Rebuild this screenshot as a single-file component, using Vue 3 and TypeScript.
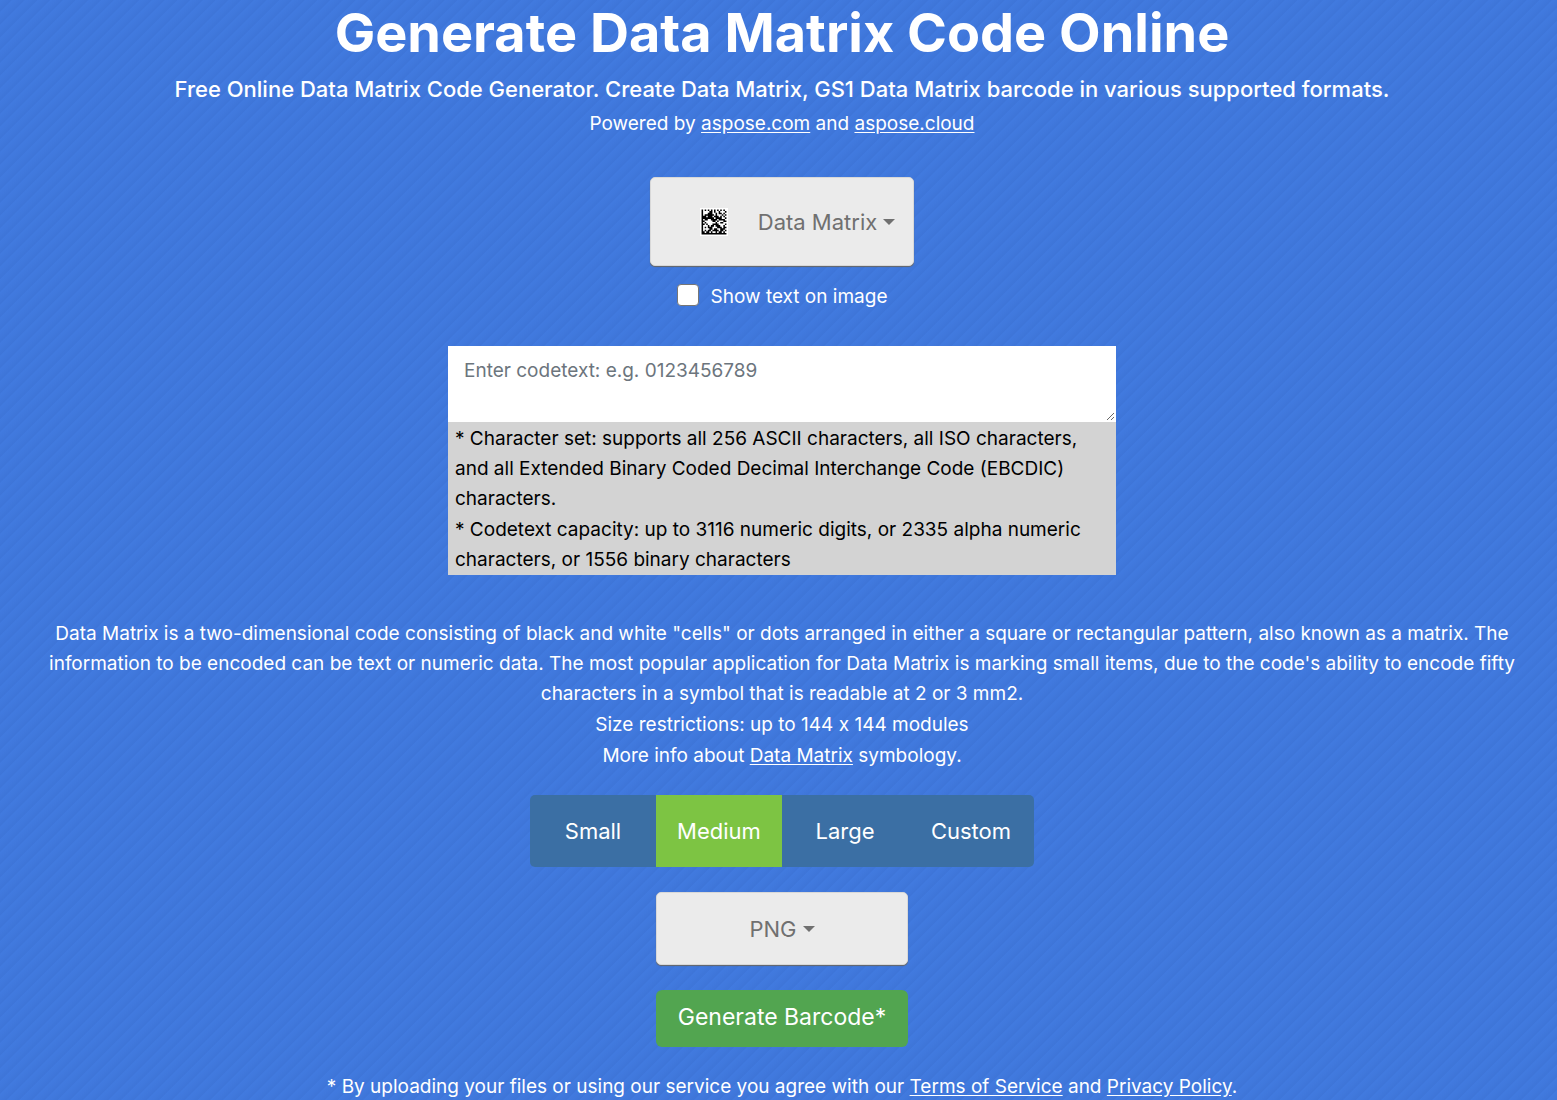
<script setup lang="ts">
import { ref } from 'vue'

const codetext = ref('')
const showText = ref(false)
const sizes = ['Small', 'Medium', 'Large', 'Custom']
const selectedSize = ref('Medium')

const modules = [
  '1010101010101010',
  '1000011010010001',
  '1000111001011010',
  '1011111101000101',
  '1110111011101010',
  '1111111101111001',
  '1011001111011110',
  '1100000110100011',
  '1010000001001100',
  '1101000111100001',
  '1000101101110010',
  '1010111000111011',
  '1000011011001110',
  '1010110111101101',
  '1101101001011010',
  '1111111111111111',
]
const modulePath = modules
  .flatMap((row, y) => [...row].map((bit, x) => (bit === '1' ? `M${x} ${y}h1v1h-1z` : '')))
  .join('')
</script>

<template>
  <main class="page">
    <header class="intro">
      <h1>Generate Data Matrix Code Online</h1>
      <h2>Free Online Data Matrix Code Generator. Create Data Matrix, GS1 Data Matrix barcode in various supported formats.</h2>
      <p>Powered by <a href="#aspose-com">aspose.com</a> and <a href="#aspose-cloud">aspose.cloud</a></p>
    </header>

    <button type="button" class="dropdown symbology">
      <svg class="symbol" viewBox="-1 -1 18 18" aria-hidden="true">
        <rect x="-1" y="-1" width="18" height="18" fill="#fff" />
        <path :d="modulePath" fill="#000" />
      </svg>
      <span>Data Matrix</span>
      <span class="caret"></span>
    </button>

    <label class="check">
      <input v-model="showText" type="checkbox" />
      <span>Show text on image</span>
    </label>

    <section class="entry">
      <textarea v-model="codetext" aria-label="Codetext" placeholder="Enter codetext: e.g. 0123456789"></textarea>
      <div class="notes">
        <p>
          * Character set: supports all 256 ASCII characters, all ISO characters,<br />
          and all Extended Binary Coded Decimal Interchange Code (EBCDIC)<br />
          characters.
        </p>
        <p>
          * Codetext capacity: up to 3116 numeric digits, or 2335 alpha numeric<br />
          characters, or 1556 binary characters
        </p>
      </div>
    </section>

    <section class="about">
      <p>
        Data Matrix is a two-dimensional code consisting of black and white "cells" or dots arranged in either a square or rectangular pattern, also known as a matrix. The<br />
        information to be encoded can be text or numeric data. The most popular application for Data Matrix is marking small items, due to the code's ability to encode fifty<br />
        characters in a symbol that is readable at 2 or 3 mm2.
      </p>
      <p>Size restrictions: up to 144 x 144 modules</p>
      <p>More info about <a href="#data-matrix">Data Matrix</a> symbology.</p>
    </section>

    <div class="sizes" role="group" aria-label="Image size">
      <button
        v-for="size in sizes"
        :key="size"
        type="button"
        :class="{ active: size === selectedSize }"
        @click="selectedSize = size"
      >{{ size }}</button>
    </div>

    <button type="button" class="dropdown format">
      <span>PNG</span>
      <span class="caret"></span>
    </button>

    <button type="button" class="generate">Generate Barcode*</button>

    <p class="terms">
      * By uploading your files or using our service you agree with our
      <a href="#terms">Terms of Service</a> and <a href="#privacy">Privacy Policy</a>.
    </p>
  </main>
</template>

<style>
body {
  background: #4078dc;
}
</style>

<style scoped>
.page {
  box-sizing: border-box;
  display: flex;
  flex-direction: column;
  align-items: center;
  padding-left: 7px;
  overflow: hidden;
  background: repeating-linear-gradient(135deg, #417adf 0, #4078dc 4px, #3e75d8 8px, #417adf 9px);
  color: #fff;
  font-family: Inter, "Liberation Sans", sans-serif;
  font-feature-settings: "calt" 0;
  font-size: 19px;
  line-height: 30px;
  text-align: center;
}
h1, h2, p { margin: 0; }
h1 { font-size: 54px; font-weight: 700; line-height: 66px; }
h2 { margin-top: 8px; font-size: 22px; font-weight: 500; line-height: 31px; }
.intro p { margin-top: 4px; }
a { color: inherit; text-underline-offset: 2px; }
button { font-family: inherit; cursor: pointer; }
.dropdown {
  display: flex;
  align-items: center;
  justify-content: center;
  box-sizing: border-box;
  border: 1px solid #d8d8d8;
  border-radius: 5px;
  background: #ebebeb;
  box-shadow: 0 1px 1px #666;
  color: #707070;
  font-size: 22px;
  line-height: 30px;
  white-space: nowrap;
}
.symbology { width: 264px; height: 89px; margin-top: 38px; padding: 0 18px 0 49px; }
.symbol { flex: none; width: 28px; height: 28px; margin-right: 30px; }
.caret {
  margin-left: 6px;
  border: 6px solid transparent;
  border-top-color: currentColor;
  border-bottom: 0;
}
.check { display: flex; align-items: center; gap: 12px; margin-top: 16px; }
.check input {
  appearance: none;
  width: 22px;
  height: 22px;
  margin: 0 0 4px;
  border: 1px solid #767676;
  border-radius: 4px;
  background: #fff;
}
.entry { width: 668px; max-width: 100%; margin-top: 34px; background: #d3d3d3; color: #000; text-align: left; }
textarea {
  display: block;
  box-sizing: border-box;
  width: 100%;
  height: 76px;
  padding: 9px 15px;
  border: 1px solid #fff;
  font: inherit;
  resize: vertical;
}
textarea::placeholder { color: #6c757d; opacity: 1; }
.notes { padding: 2px 7px 0; white-space: nowrap; }
.notes p + p, .about p + p { margin-top: 1px; }
.about { margin-top: 44px; white-space: nowrap; }
.sizes { display: flex; margin-top: 24px; overflow: hidden; border-radius: 5px; }
.sizes button {
  width: 126px;
  height: 72px;
  padding: 0;
  border: 0;
  background: #3b6fa4;
  color: #fff;
  font-size: 22px;
}
.sizes .active { background: #7dc443; }
.format { width: 252px; height: 73px; margin-top: 25px; }
.generate {
  width: 252px;
  height: 57px;
  margin-top: 25px;
  padding: 0 0 4px;
  border: 0;
  border-radius: 6px;
  background: #52a550;
  color: #fff;
  font-size: 23px;
}
.terms { margin-top: 25px; }
</style>
